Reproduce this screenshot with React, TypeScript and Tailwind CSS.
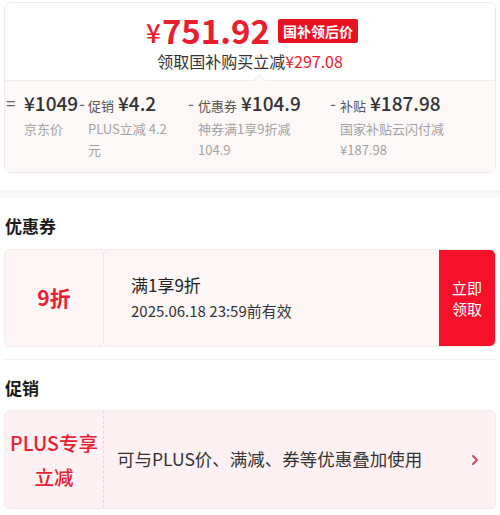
import React from 'react';

const font = { fontFamily: '"Noto Sans CJK SC", "Noto Sans", sans-serif' };

type Part = { op: string; opW: string; label?: string; value: string; sub: string; subW: string };

const parts: Part[] = [
  { op: '=', opW: 'w-[18px]', value: '¥1049', sub: '京东价', subW: 'w-[56px]' },
  { op: '-', opW: 'w-[9px]', label: '促销', value: '¥4.2', sub: 'PLUS立减 4.2 元', subW: 'w-[88px]' },
  { op: '-', opW: 'w-[10px]', label: '优惠券', value: '¥104.9', sub: '神券满1享9折减 104.9', subW: 'w-[100px]' },
  { op: '-', opW: 'w-[10px]', label: '补贴', value: '¥187.98', sub: '国家补贴云闪付减 ¥187.98', subW: 'w-[112px]' },
];

const colW = ['w-[74px]', 'w-[109px]', 'w-[142px]', 'flex-1'];

export default function App() {
  return (
    <div style={font} className="w-[500px] h-[515px] bg-white overflow-hidden text-[#333]">
      {/* Price card */}
      <div className="mx-[4px] mt-[2px] border border-[#f5e7e9] rounded-[7px] overflow-hidden">
        <div className="relative h-[77px] bg-white flex flex-col items-center pt-[9px]">
          <div className="flex items-center h-[36px] pl-[4px]">
            <span className="text-[#e8202e] text-[26px] font-medium leading-none mt-[4px] mr-[1px]">¥</span>
            <span className="text-[#e8202e] text-[33px] font-semibold leading-none">751.92</span>
            <span className="ml-[8px] bg-[#ea1222] text-white text-[14px] font-bold leading-none px-[5px] h-[24px] flex items-center rounded-[2px] mt-[2px]">
              国补领后价
            </span>
          </div>
          <div className="text-[16px] leading-[20px] mt-[3px] text-[#333]">
            领取国补购买立减<span className="text-[#e8202e]">¥297.08</span>
          </div>
          <div className="absolute bottom-[-5px] left-[250px] w-[9px] h-[9px] rotate-45 bg-[#fdf8f8] border-l border-t border-[#f5e7e9]" />
        </div>
        <div className="h-[92px] bg-[#fdf8f8] border-t border-[#f5e7e9] flex pt-[10px]">
          {parts.map((p, i) => (
            <div key={i} className={`${colW[i]} flex ${i === 0 ? 'pl-[1px]' : ''}`}>
              <span className={`${p.opW} text-[17px] leading-[24px] text-[#666] shrink-0`}>{p.op}</span>
              <div className="flex flex-col">
                <div className="flex items-baseline h-[24px]">
                  {p.label && <span className="text-[13px] text-[#555] mr-[4px]">{p.label}</span>}
                  <span className="text-[19px] leading-[24px] text-[#333] font-medium">{p.value}</span>
                </div>
                <div className={`${p.subW} text-[13px] leading-[21px] text-[#a3a3a3] mt-[3px]`}>{p.sub}</div>
              </div>
            </div>
          ))}
        </div>
      </div>

      <div className="h-[8px] bg-[#f7f7fa] mt-[17px]" />

      {/* Coupon */}
      <div className="px-[5px] pt-[18px] pb-[13px] text-[17px] font-bold text-[#1a1a1a] leading-[20px]">优惠券</div>
      <div className="mx-[4px] h-[98px] flex rounded-[6px] border border-[#f6e9eb] bg-[#fdf5f6] overflow-hidden">
        <div className="w-[98px] flex items-center justify-center text-[#e8202e] text-[21px] font-bold">9折</div>
        <div className="relative flex-1 border-l border-[#f2e2e5] flex flex-col justify-center pl-[27px]">
          <div className="absolute -left-[4px] -top-[4px] w-[7px] h-[7px] rounded-full bg-white border border-[#f2e2e5]" />
          <div className="absolute -left-[4px] -bottom-[4px] w-[7px] h-[7px] rounded-full bg-white border border-[#f2e2e5]" />
          <div className="text-[17px] leading-[22px] text-[#222]">满1享9折</div>
          <div className="text-[15px] leading-[22px] text-[#333] mt-[4px]">2025.06.18 23:59前有效</div>
        </div>
        <div className="w-[56px] bg-[#f5112a] text-white text-[15px] leading-[21px] flex flex-col items-center justify-center">
          <span>立即</span>
          <span>领取</span>
        </div>
      </div>

      <div className="mx-[4px] mt-[12px] border-b border-[#f2f2f2]" />

      {/* Promotion */}
      <div className="px-[5px] pt-[18px] pb-[12px] text-[17px] font-bold text-[#1a1a1a] leading-[20px]">促销</div>
      <div className="mx-[4px] h-[99px] flex items-center rounded-[6px] border border-[#f6e9eb] bg-[#fdf1f3]">
        <div className="w-[99px] h-full flex flex-col items-center justify-center text-[#e8202e] text-[19.5px] font-medium leading-[34px] border-r border-dashed border-[#ead6da]">
          <span>PLUS专享</span>
          <span>立减</span>
        </div>
        <div className="flex-1 pl-[13px] text-[17.5px] text-[#333]">可与PLUS价、满减、券等优惠叠加使用</div>
        <svg width="8" height="12" viewBox="0 0 8 12" className="mr-[16px]">
          <path d="M2 2 L6 6 L2 10" fill="none" stroke="#cf4a68" strokeWidth="2" strokeLinecap="round" strokeLinejoin="round" />
        </svg>
      </div>
    </div>
  );
}
